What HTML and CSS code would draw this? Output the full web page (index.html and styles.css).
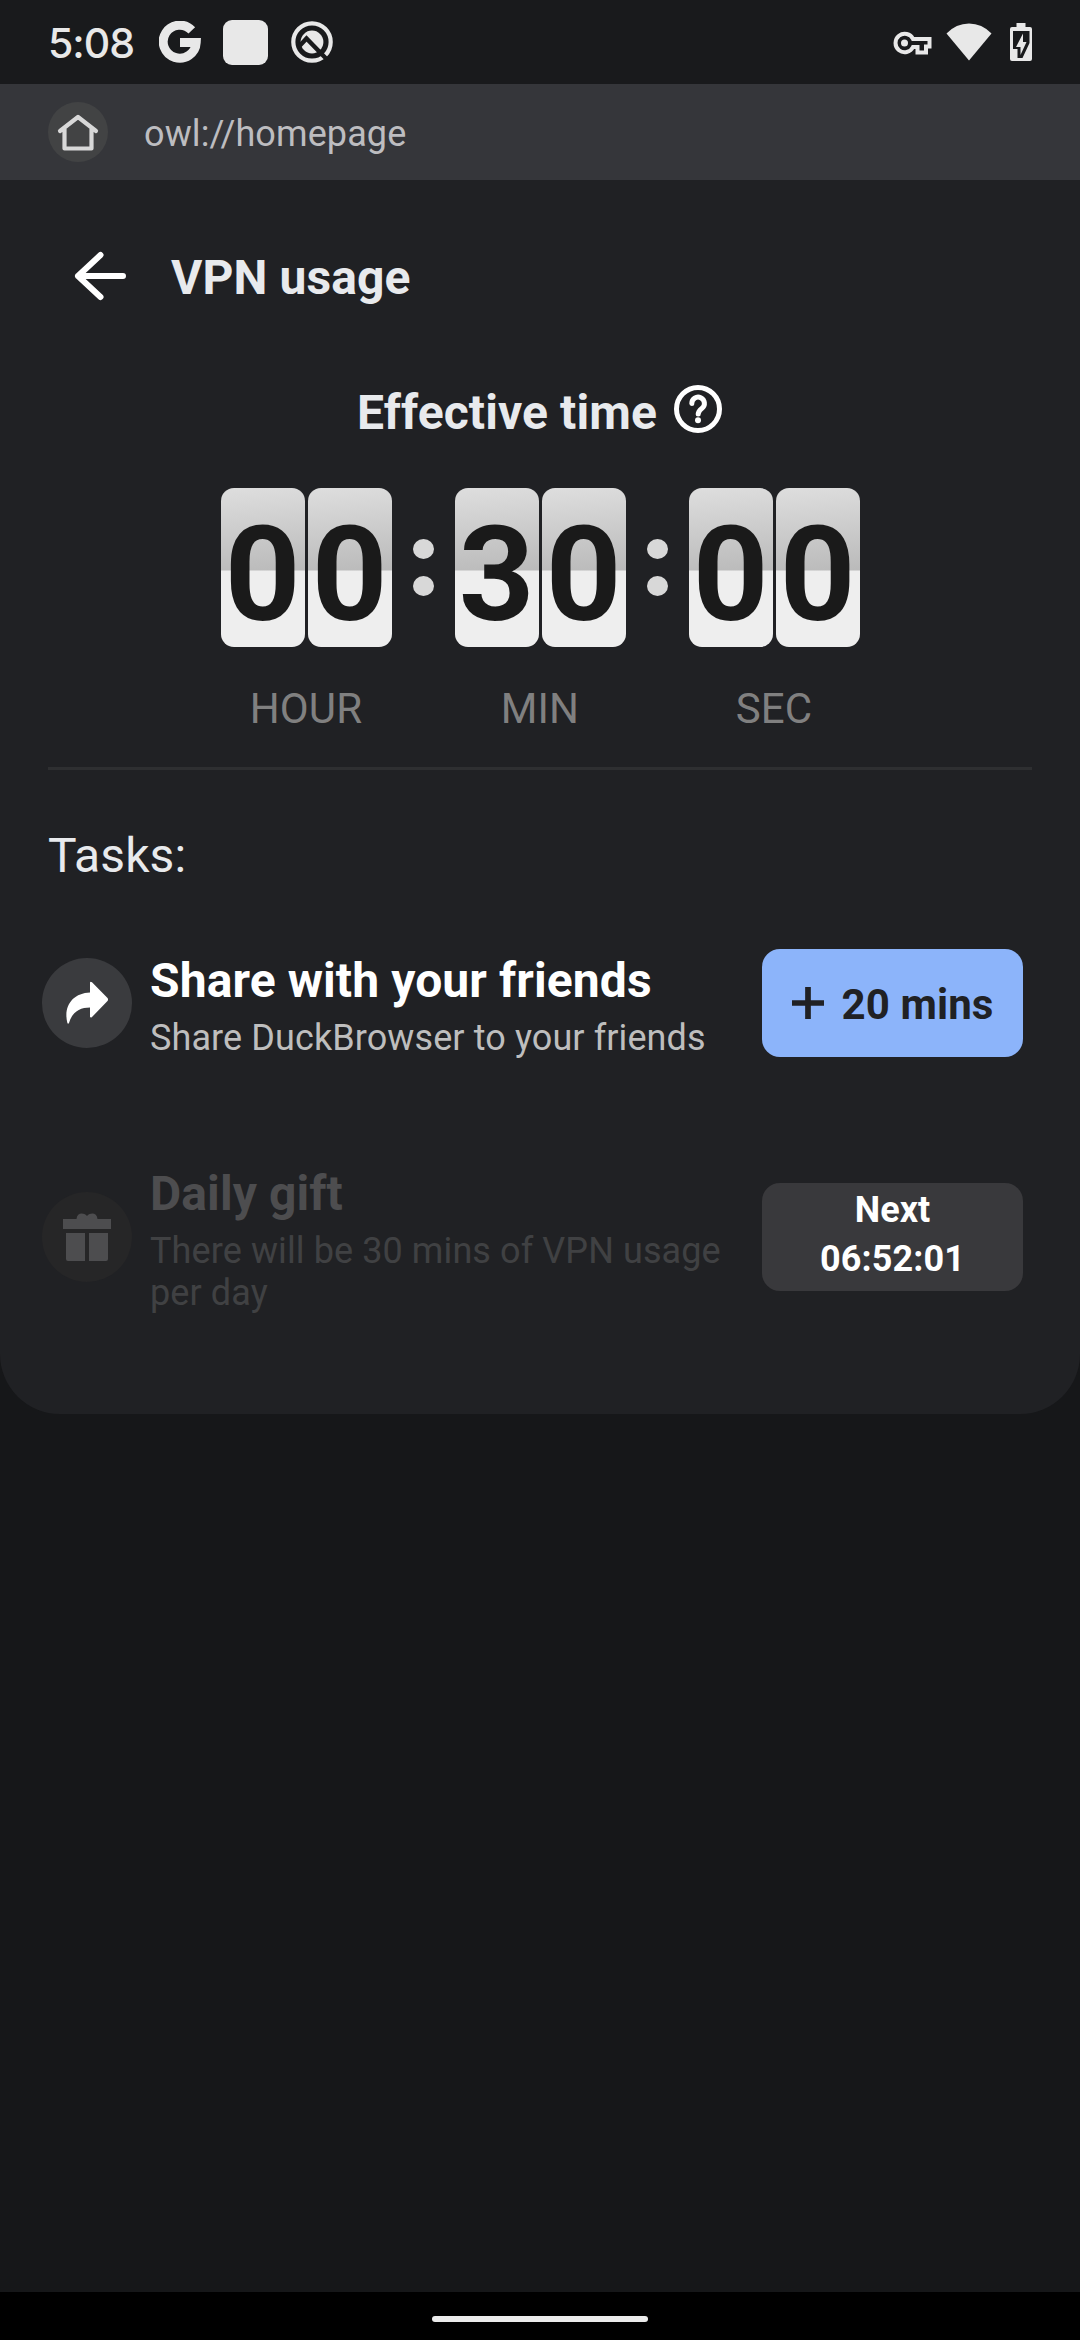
FILE: index.html
```html
<!DOCTYPE html>
<html lang="en">
<head>
<meta charset="utf-8">
<title>VPN usage</title>
<link rel="stylesheet" href="styles.css">
</head>
<body>
<div class="screen">
  <header class="status">
    <span class="clock">5:08</span>
    <svg class="ic-google" width="42" height="42" viewBox="0 0 42 42" fill="none" stroke="#e8e8e8" stroke-width="9"><path d="M32.800 9.400A16.500 16.500 0 1 0 37.200 21.500H21"/></svg>
    <span class="ic-square"></span>
    <svg class="ic-q" width="42" height="42" viewBox="0 0 42 42"><circle cx="21" cy="21" r="18.700" fill="none" stroke="#e8e8e8" stroke-width="4.200"/><circle cx="21" cy="21" r="11.400" fill="#e8e8e8"/><path d="M8 25.500L15.500 17.500L36 38.500" fill="none" stroke="#191a1c" stroke-width="4.400"/></svg>
    <span class="spacer"></span>
    <svg class="ic-key" width="40" height="24" viewBox="0 0 40 24"><path d="M20 8H36.500v7.500H33V21.500H24.500V16H20A9.200 9.200 0 1 1 20 8Z" fill="none" stroke="#e8e8e8" stroke-width="4"/><circle cx="11.500" cy="12" r="3.500" fill="#e8e8e8"/></svg>
    <svg class="ic-wifi" width="46" height="38" viewBox="0 0 46 38"><path d="M.5 10.500Q10 .5 23 .5t22.500 10L23 37.500Z" fill="#e8e8e8"/></svg>
    <svg class="ic-battery" width="24" height="40" viewBox="0 0 24 40"><path d="M7.500 1h9v4H21q2 0 2 2v30q0 2-2 2H3q-2 0-2-2V7q0-2 2-2h4.500Z" fill="#e8e8e8"/><path d="M4 9h16.500v12L13.500 36H8.500V27H4Z" fill="#191a1c"/><path d="M14 11.500L7 25h4.500v8L17.500 20H14Z" fill="#e8e8e8"/></svg>
  </header>
  <div class="address">
    <span class="home"><svg width="42" height="38" viewBox="0 0 42 38" fill="none" stroke="#d8d8d8" stroke-width="4.200" stroke-linecap="round" stroke-linejoin="round"><path d="M3 18L21 4L39 18M7.500 16v19.500h27V16"/></svg></span>
    <span class="url">owl://homepage</span>
  </div>
  <main class="card">
    <div class="title">
      <svg width="52" height="50" viewBox="0 0 52 50" fill="none" stroke="#fff" stroke-width="6" stroke-linecap="round" stroke-linejoin="round"><path d="M26.500 4L4 25L26.500 46M4 25H49"/></svg>
      <h1>VPN usage</h1>
    </div>
    <div class="effective">
      <h2>Effective time</h2>
      <svg width="50" height="50" viewBox="0 0 50 50" fill="none" stroke="#fff" stroke-width="5"><circle cx="25" cy="25" r="21.500"/><path d="M18.800 19.500a6.300 6.300 0 1 1 10.200 4.800c-2.500 2-3.800 3-3.800 5.700" stroke-linecap="round"/><circle cx="25" cy="36.300" r="3" fill="#fff" stroke="none"/></svg>
    </div>
    <div class="timer">
      <div class="unit"><div class="pair"><span class="digit">0</span><span class="digit">0</span></div><span class="label">HOUR</span></div>
      <div class="dots"><i></i><i></i></div>
      <div class="unit"><div class="pair"><span class="digit">3</span><span class="digit">0</span></div><span class="label">MIN</span></div>
      <div class="dots"><i></i><i></i></div>
      <div class="unit"><div class="pair"><span class="digit">0</span><span class="digit">0</span></div><span class="label">SEC</span></div>
    </div>
    <h3 class="tasks">Tasks:</h3>
    <section class="task share">
      <span class="badge"><svg width="44" height="44" viewBox="0 0 44 44" fill="#fff"><path d="M25 1.500q.5-1.500 2-.2L42.500 17q1.200 1.500 0 3L27 36q-1.500 1.200-2-.3V26.500C15 26.500 7 31 4 42q-1 1.500-1.600 0C-2 25 8 12 25 11.500Z"/></svg></span>
      <div class="copy"><h4>Share with your friends</h4><p>Share DuckBrowser to your friends</p></div>
      <button class="btn add"><svg width="32" height="32" viewBox="0 0 32 32" stroke="#202124" stroke-width="5.700"><path d="M16 0v32M0 16h32"/></svg><span>20 mins</span></button>
    </section>
    <section class="task gift">
      <span class="badge"><svg width="48" height="48" viewBox="0 0 48 48" fill="#4d4d4f"><path d="M0 6H13.500C14 0 20-1 24 3C28-1 34 0 34.500 6H48v10H0ZM3 20h19v28H5q-2 0-2-2ZM26 20h19v26q0 2-2 2H26Z"/></svg></span>
      <div class="copy"><h4>Daily gift</h4><p>There will be 30 mins of VPN usage per day</p></div>
      <button class="btn next"><span>Next</span><span>06:52:01</span></button>
    </section>
  </main>
  <footer class="nav"><span class="pill"></span></footer>
</div>
</body>
</html>
```
FILE: styles.css
```css
* { box-sizing: border-box; }
body, h1, h2, h3, h4, p { margin: 0; }
body { font-family: Roboto, "Liberation Sans", sans-serif; letter-spacing: 0.1px; background: #161719; color: #e8eaed; }
.screen { width: 1080px; height: 2340px; display: flex; flex-direction: column; background: #161719; overflow: hidden; }

.status { height: 84px; flex: none; display: flex; align-items: center; padding: 0 47px 0 48px; background: #191a1c; }
.clock { width: 111px; padding-top: 2px; font: 500 41px/50px Inter, sans-serif; letter-spacing: -1px; color: #e8e8e8; }
.ic-square { width: 45px; height: 45px; margin: 0 23px 0 22px; border-radius: 9px; background: #e8e8e8; }
.spacer { flex: 1; }
.ic-key { margin: 2px 13px 0 0; }
.ic-wifi { margin-right: 17px; }

.address { height: 96px; flex: none; display: flex; align-items: flex-start; padding: 18px 48px; background: #35363a; }
.home { width: 60px; height: 60px; border-radius: 50%; background: #424344; display: flex; align-items: center; justify-content: center; }
.url { margin-left: 36px; padding-top: 11px; font-size: 36px; line-height: 42px; color: #bdbdc0; }

.card { height: 1234px; flex: none; background: #202124; border-radius: 0 0 60px 60px; }
h1, h2, h3, h4 { font-size: 48px; line-height: 56px; font-weight: 700; }
.title { display: flex; align-items: flex-start; padding: 71px 0 0 74px; }
.title h1 { margin-left: 45px; margin-top: -1px; }
.effective { display: flex; justify-content: center; align-items: flex-start; gap: 16px; padding-top: 78px; }
.effective h2 { margin-top: 1px; margin-bottom: -1px; }
.timer { display: flex; justify-content: center; margin: 0 48px; padding-top: 48px; height: 330px; border-bottom: 3px solid #2e2f31; }
.unit { display: flex; flex-direction: column; align-items: center; }
.pair { display: flex; gap: 3px; }
.digit { width: 84px; height: 159px; border-radius: 13px; color: #1a1a1a; background: linear-gradient(175deg, #dedede, #bababa) top / 100% 82.500px no-repeat, #eee; font-size: 132px; line-height: 174px; font-weight: 700; letter-spacing: 0; text-align: center; }
.label { margin-top: 37px; font-size: 42px; line-height: 50px; color: #808080; }
.dots { width: 63px; padding: 51px 21px 0; display: flex; flex-direction: column; gap: 17px; }
.dots i { width: 21px; height: 20px; border-radius: 50%; background: #d8d8d8; }

.tasks { padding: 58px 48px 0; font-weight: 400; }
.task { display: flex; align-items: center; padding: 0 57px 0 42px; }
.badge { width: 90px; height: 90px; flex: none; border-radius: 50%; background: #3a3b3e; display: flex; align-items: center; justify-content: center; }
.copy { flex: 1; margin: 0 30px 0 18px; padding-top: 5px; }
.copy p { margin-top: 8px; font-size: 36px; line-height: 42px; }
.btn { width: 261px; height: 108px; flex: none; border: 0; padding: 0; border-radius: 18px; font-family: inherit; letter-spacing: 0.1px; font-weight: 700; display: flex; align-items: center; justify-content: center; }
.share { height: 108px; margin-top: 65px; }
.share h4 { color: #fff; }
.share p { color: #bebebe; }
.add { gap: 18px; background: #8cb4fa; color: #202124; font-size: 42px; line-height: 50px; }
.add span { padding-top: 3px; }
.gift { height: 150px; margin-top: 105px; }
.gift h4 { color: #4d4d4f; }
.gift p { color: #404143; }
.gift .badge { background: #262627; }
.next { flex-direction: column; padding-bottom: 4px; background: #39393c; color: #fff; font-size: 36px; line-height: 49px; }

.nav { height: 48px; flex: none; margin-top: auto; background: #000; display: flex; justify-content: center; padding-top: 24px; }
.pill { width: 216px; height: 6px; border-radius: 3px; background: #ebebeb; }
```
